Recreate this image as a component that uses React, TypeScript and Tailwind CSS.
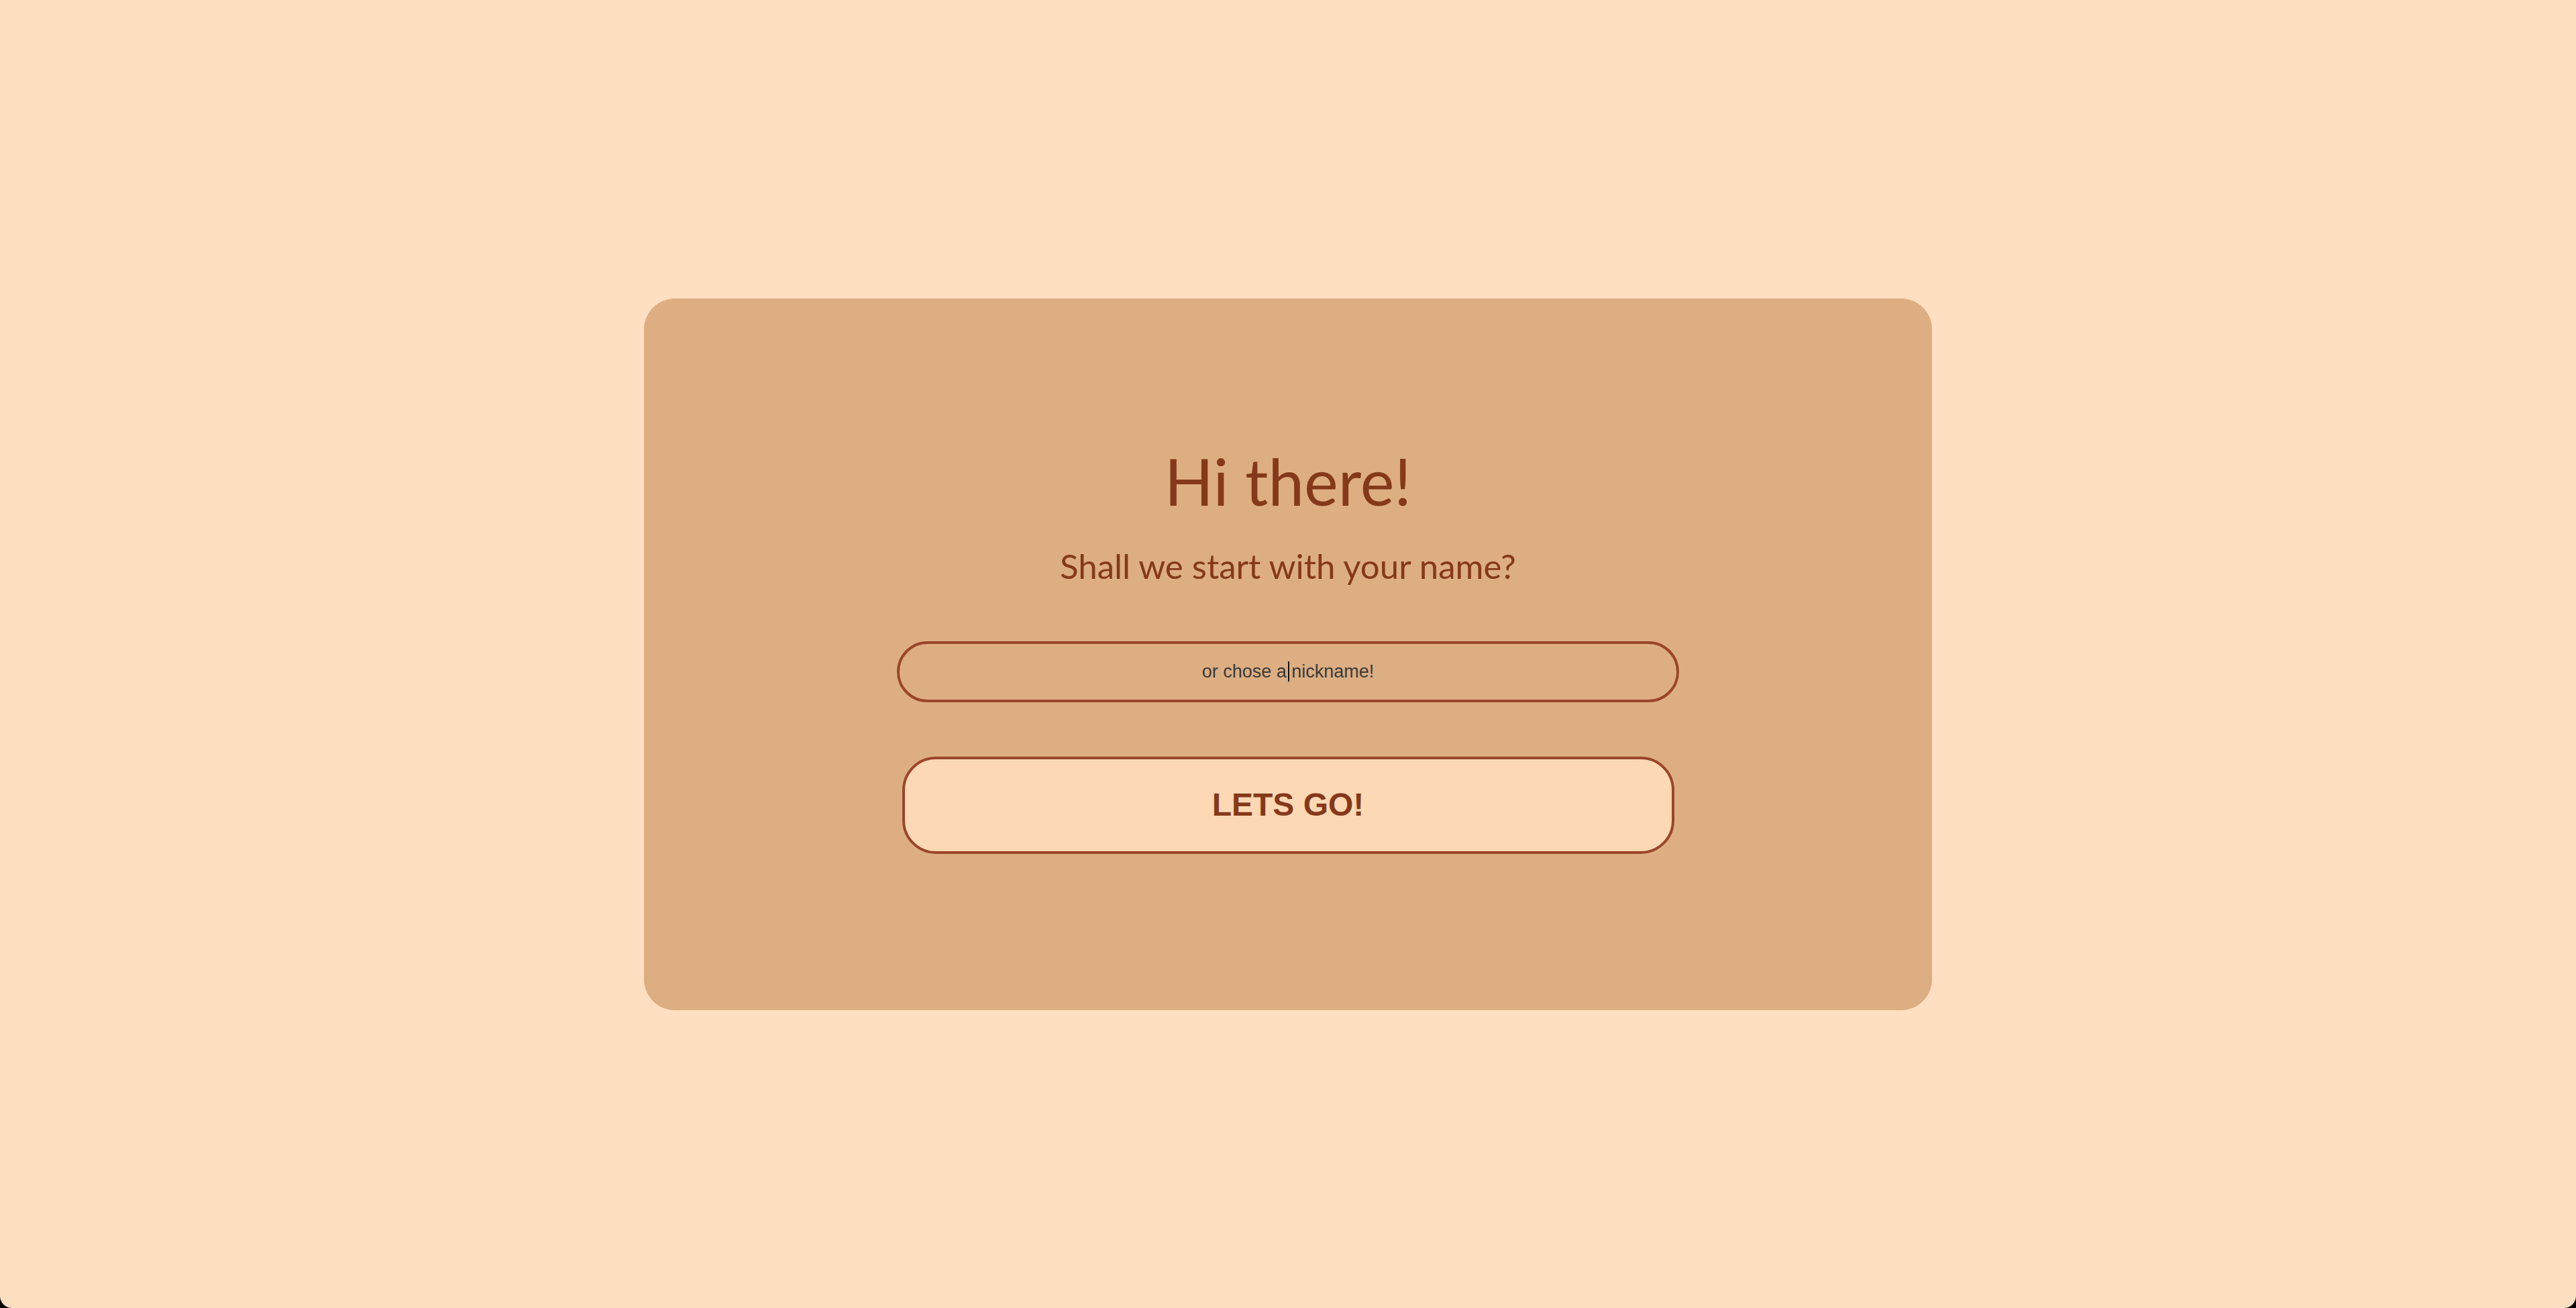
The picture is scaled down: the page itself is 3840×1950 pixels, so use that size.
import React from "react";

export default function App() {
    return (
        <div className="w-full h-[1950px] bg-black">
            <div className="w-full h-full bg-[#ffdfc1] rounded-b-[18px] flex items-center justify-center">
                <div className="w-[1920px] bg-[#ddae81] rounded-[46px] flex flex-col items-center pt-[224px] pb-[233px]">
                    <h1 className="font-['Lato',sans-serif] text-[96px] leading-none text-[#85391a]">
                        Hi there!
                    </h1>
                    <p className="mt-[53px] font-['Lato',sans-serif] text-[51px] leading-none text-[#85391a]">
                        Shall we start with your name?
                    </p>

                    <div className="relative mt-[87px]">
                        <input
                            type="text"
                            placeholder="or chose a nickname!"
                            className="w-[1166px] h-[91px] rounded-full border-4 border-[#9b4529] bg-transparent text-center font-['Liberation_Sans',Arial,sans-serif] text-[27px] text-[#3a3a3a] placeholder:text-[#3a3a3a] outline-none"
                        />
                        {/* caret */}
                        <span className="absolute left-1/2 top-[30px] w-[2px] h-[30px] bg-[#111]" />
                    </div>

                    <button className="mt-[81px] w-[1151px] h-[145px] rounded-[50px] border-4 border-[#9b4529] bg-[#fcd8b4] font-['Liberation_Sans',Arial,sans-serif] font-bold text-[48px] text-[#85391a]">
                        LETS GO!
                    </button>
                </div>
            </div>
        </div>
    );
}
